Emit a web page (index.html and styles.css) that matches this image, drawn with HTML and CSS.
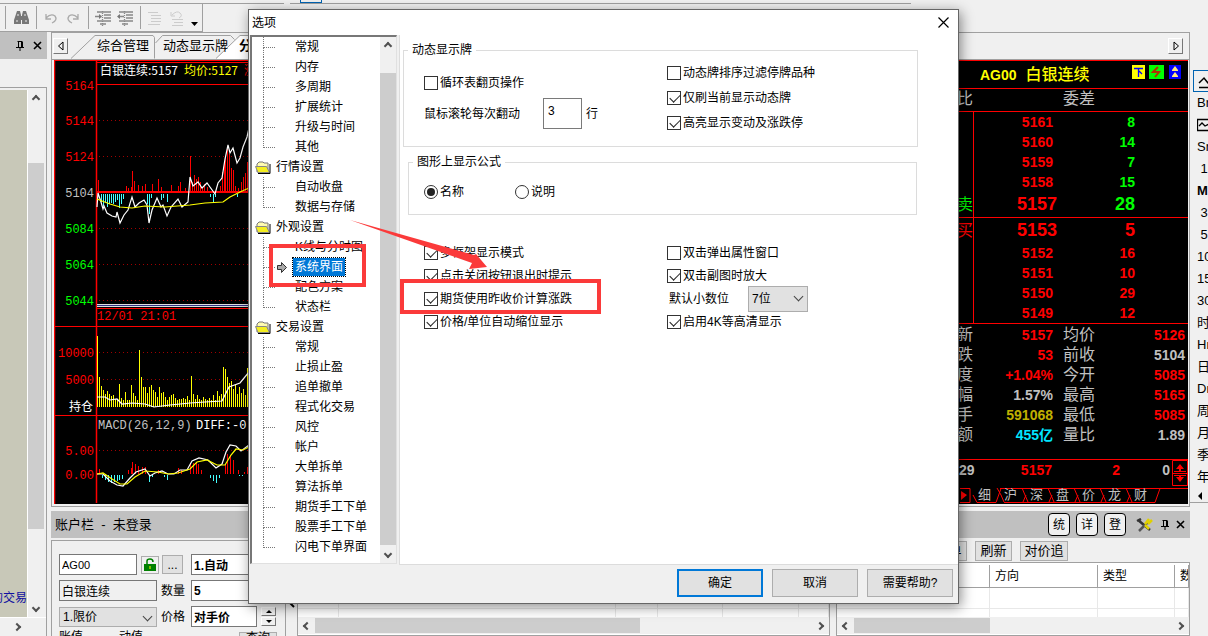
FILE: index.html
```html
<!DOCTYPE html>
<html lang="zh-CN">
<head>
<meta charset="utf-8">
<title>选项</title>
<link rel="stylesheet" href="styles.css">
</head>
<body>
<svg class="defs" aria-hidden="true">
  <symbol id="pin" viewBox="0 0 9 10"><path d="M2.5 1v5M1.5 .5h5M5.5 1v5M6.5 1v5M0 6.500h8M4 7v3" fill="none" stroke="#000"/></symbol>
  <symbol id="close" viewBox="0 0 9 9"><path d="M1 1l7 7M8 1l-7 7" fill="none" stroke="#000" stroke-width="1.6"/></symbol>
  <symbol id="folder" viewBox="0 0 16 13"><path d="M2 3l2-2h4l1 1h4v9H2z" fill="#fffbb0" stroke="#777"/><path d="M.5 5.500h11l3 6H3z" fill="#f4ee20" stroke="#888"/><path d="M3 12.500h12V3" fill="none" stroke="#000"/></symbol>
</svg>

<div class="app">
  <div class="strip"><div class="strip-a"></div><div class="strip-b"><span></span></div></div>
  <div class="toolbar">
    <svg width="202" height="28" viewBox="0 4 202 28" aria-hidden="true">
      <path d="M5.500 6v23M36.500 6v23M88.500 6v23M140.500 6v23" stroke="#a0a0a0"/>
      <g fill="#777"><path d="M17 11h3l1 4v9h-7v-4zM23 11h3l3 9v4h-7v-9z"/><path d="M19 16h5v4h-5z"/></g>
      <path d="M16 21h2M25 21h2M18 14v2M25 14v2" stroke="#eee"/>
      <g fill="none" stroke="#aaa" stroke-width="1.300"><path d="M46 14v5h5M46 18q5-5 9-2q3 4-3 7"/><path d="M78 14v5h-5M78 18q-5-5-9-2q-3 4 3 7"/></g>
      <g stroke="#888" stroke-width="1.300"><path d="M97 12h14M104 15h7M104 18h7M97 21h14M100 24h6M119 12h14M126 15h7M126 18h7M119 21h14M122 24h6"/><path d="M95 16.500h5M118 16.500h6"/><path d="M102.500 11v15M124.500 11v15" stroke-dasharray="1 1"/></g>
      <path d="M99 14l3 2.500-3 2.500zM120 14l-3 2.500 3 2.500z" fill="#777"/>
      <g stroke="#ccc" fill="none"><path d="M148 12.500h10M151 15.500h10M151 18.500h10M151 21.500h10M148 24.500h12M172 19.500h11M174 22.500h9M172 25.500h11"/><path d="M171 12v4h4M172 15q5-5 8-2t-1 5"/></g>
      <path d="M191 22h7l-3.500 4z" fill="#000"/>
    </svg>
  </div>

  <div class="workspace">
    <aside class="left">
      <div class="left-head"><svg width="9" height="10"><use href="#pin"/></svg><svg width="9" height="9"><use href="#close"/></svg></div>
      <div class="left-body">
        <div class="left-row">
          <div class="olive"><a href="#trade">的交易</a></div>
          <div class="vbar"><i class="up"></i><b class="left-thumb"></b><i class="down"></i></div>
        </div>
        <div class="left-foot"><i class="right"></i></div>
      </div>
    </aside>

    <main class="main">
      <section class="market">
        <div class="tabs">
          <svg class="tab-shape" width="210" height="26" viewBox="52 33 210 26" aria-hidden="true">
            <path d="M71 58.500L95 35.500h58l1.500 2v21M155.500 43l7-7.500h68l4 4" fill="none" stroke="#a0a0a0"/>
            <path d="M216 59L240 35.500h22V59z" fill="#fff"/><path d="M216 58.500L240 35.500h22" fill="none" stroke="#a0a0a0"/>
          </svg>
          <button class="tab-arrow" aria-label="左"><svg width="8" height="10"><path d="M6 1v8L1.500 5z" fill="none" stroke="#000"/></svg></button>
          <a class="tab tab-1" href="#a">综合管理</a><a class="tab tab-2" href="#b">动态显示牌</a><a class="tab tab-3" href="#c">分时</a>
          <button class="tab-arrow tab-end" aria-label="右"><svg width="8" height="10"><path d="M2 1v8l4.500-4z" fill="none" stroke="#000"/></svg></button>
        </div>
        <div class="boards">
          <svg class="chart" role="img" aria-label="白银连续分时">
            <g transform="translate(-54 -60)">
              <g fill="none" stroke="#f00">
                <path d="M54 60.500h900M97 62.500h860M97 84.500h860M97 308.500h860M54 326.500h900M54 415.500h900" />
                <path d="M54.500 60v444M96.500 60v355M96.500 415v88M96.500 192h860" stroke-width="1.500"/>
                <path d="M97 192h860" stroke-width="2"/>
                <path d="M99 120.500h158M99 156.500h158M99 228.500h158M99 264.500h158M99 300.500h158M99 352.500h158M99 379.500h158M99 450.500h158" stroke="#a00000" stroke-dasharray="1 3"/>
              </g>
              <path d="M97 304.500h860M97 306.500h860" stroke="#ddd"/><path d="M97 305.500h860" stroke="#303080"/>
              <g shape-rendering="crispEdges"><path id="up" stroke="#f00"/><path id="dn" stroke="#4ff"/><path id="vol" stroke="#ff0"/>
              <path id="mup" stroke="#f00"/><path id="mdn" stroke="#4ff"/></g>
              <g fill="none" stroke="#fff" stroke-width="1.200">
                <path d="M97 207L98 193l3 9 2 7 1-3 3 7 5 3 4 1 1-5 3 11 4-8 4-5 4-13 3 10 4-4 5-3 3 5 2 18 3-13 5-12 4 9 2-2 4 11 4-9 7-8 4 8 6-5 2-25 3 9 5-4 4 6 5-5 8 11 3-11 4-5 3-19 3-14 2 8 3-5 4 15 3-5 3-11 4-10 2-9"/>
                <path d="M97 397h8l5 3 7-1 5 5 10-1 13 1 9 3 16-2 20-2 15-1 17-1 7-14 11-4 9-11"/>
                <path d="M97 474h6l7 7 7 4 6 1 7-8 6-6 9-3 5 7 5-3 7-2 6 3h6l6-4h7l5-9 7-3 9 2 8 8 6-4 4-12 4-7 6 1 5 5 8-6"/>
              </g>
              <g fill="none" stroke="#ff0" stroke-width="1.200">
                <path d="M97 199l5 2 8 3 10 3 12 1 13-2 20 1 25-2 15-2 18-1 7-5 10-5 9-4"/>
                <path d="M97 474l6-1 9 6 8 5h7l8-7 10-6 13 1 10 2 10-1 12-4 7-7 10-2 10 5h8l6-10 5-6 7 1 6-3"/>
              </g>
              <g class="axis" fill="#f00">
                <text x="94" y="90">5164</text><text x="94" y="125">5144</text><text x="94" y="161">5124</text>
                <text x="94" y="197" fill="#c0c0c0">5104</text>
                <g fill="#0f0"><text x="94" y="233">5084</text><text x="94" y="269">5064</text><text x="94" y="305">5044</text></g>
                <text x="94" y="357">10000</text><text x="94" y="384">5000</text><text x="94" y="455">5.00</text><text x="94" y="479">0.00</text>
              </g>
              <text class="cjk" x="69" y="411" fill="#fff">持仓</text>
              <text class="mono" x="97" y="320" fill="#f00">12/01 21:01</text>
              <text class="mono" x="98" y="429" fill="#c0c0c0">MACD(26,12,9)</text><text class="mono" x="196" y="429" fill="#fff">DIFF:-0.</text>
              <text class="cjk" x="100" y="75" fill="#fff">白银连续:5157</text><text class="cjk" x="184" y="75" fill="#ff0">均价:5127</text><text class="cjk" x="244" y="75" fill="#f00">涨</text>
            </g>
          </svg>

          <section class="quote">
            <header class="quote-title"><span>AG00</span><strong>白银连续</strong>
              <svg width="50" height="14" viewBox="0 0 50 14" aria-hidden="true"><path d="M0 0h13v14H0z" fill="#ff0"/><path d="M2 3.500h9M6.500 4v8M7 6l3 3" stroke="#00f" stroke-width="1.300"/><path d="M17 0h15v14H17z" fill="#0f0"/><path d="M26 2l-5 5h6l-4 5" fill="none" stroke="#b33000" stroke-width="2"/><path d="M37 0h12v14H37z" fill="#00f"/><path d="M43 1l3 4h-6zM43 7l3 4h-6z" fill="#ffe880"/><path d="M40 5.500h6M40 11.500h6" stroke="#ffe880"/></svg>
            </header>
            <div class="ratio"><span>比</span><span>委差</span></div>
            <div class="book sell">
              <div><i></i><b>5161</b><em>8</em></div><div><i></i><b>5160</b><em>14</em></div><div><i></i><b>5159</b><em>7</em></div><div><i></i><b>5158</b><em>15</em></div><div class="big"><i>卖</i><b>5157</b><em>28</em></div>
            </div>
            <div class="book buy">
              <div class="big"><i>买</i><b>5153</b><em>5</em></div><div><i></i><b>5152</b><em>16</em></div><div><i></i><b>5151</b><em>10</em></div><div><i></i><b>5150</b><em>29</em></div><div><i></i><b>5149</b><em>12</em></div>
            </div>
            <div class="info">
              <div><span>新</span><b>5157</b><span>均价</span><b>5126</b></div>
              <div><span>跌</span><b>53</b><span>前收</span><b class="gray">5104</b></div>
              <div><span>度</span><b>+1.04%</b><span>今开</span><b>5085</b></div>
              <div><span>幅</span><b class="gray">1.57%</b><span>最高</span><b>5165</b></div>
              <div><span>手</span><b class="gold">591068</b><span>最低</span><b>5085</b></div>
              <div><span>额</span><b class="cyan">455亿</b><span>量比</span><b class="gray">1.89</b></div>
            </div>
            <div class="tick"><span>29</span><b>5157</b><b>2</b><span>0</span>
              <svg width="16" height="26" viewBox="0 0 16 26" aria-hidden="true"><path d="M.5.500h15v25H.500z" fill="none" stroke="#f00"/><path d="M8 4l4 5H9v2H7V9H4zM8 22l4-5H9v-1H7v1H4zM2 11h12v1H2zM1 13h14v1H1zM2 15h12v1H2z" fill="#f00"/></svg>
            </div>
            <nav class="quote-tabs">
              <svg width="231" height="18" viewBox="957 485 231 18" aria-hidden="true"><path d="M960 487.500h10v14h-10M1000 487.500h188M973 494l4 7.500h19l5-14M997 487l4 7M1004 501.500h151l5-14M1001 494l3 7M1022 487l6 14M1048 487l6 14M1074 487l6 14M1100 487l6 14M1126 487l6 14M1023 501l3-7M1049 501l3-7M1075 501l3-7M1101 501l3-7M1127 501l3-7" fill="none" stroke="#f00"/><path d="M961 490l6 4-6 5z" fill="#f00"/></svg>
              <a href="#1">细</a><a href="#2">沪</a><a href="#3">深</a><a href="#4">盘</a><a href="#5">价</a><a href="#6">龙</a><a href="#7">财</a>
            </nav>
          </section>
        </div>
      </section>

      <div class="account-head"><span>账户栏&nbsp; -&nbsp; 未登录</span>
        <div class="account-tools"><button>统</button><button>详</button><button>登</button>
          <svg class="tools" width="17" height="14" viewBox="0 0 17 14" aria-hidden="true"><path d="M2 2l12 10M1 3l4-2" stroke="#333" stroke-width="2.500"/><path d="M3 13L12 4" stroke="#555" stroke-width="2.500"/><path d="M9 6l4-5M12 6l4-4M9 7l4 4" stroke="#e0d000" stroke-width="2.500"/></svg>
          <svg width="9" height="10"><use href="#pin"/></svg><svg width="9" height="9"><use href="#close"/></svg></div>
      </div>

      <div class="bottom">
        <form class="order">
          <div class="order-row"><input class="f-code" value="AG00" aria-label="代码"><button type="button" class="lock" aria-label="锁定"><svg width="12" height="14"><path d="M0 6h12v7H0z" fill="green"/><path d="M3 6V3q0-2 3-2t3 3" fill="none" stroke="green" stroke-width="1.500"/><path d="M5.500 8h1v3h-1z" fill="#ff0"/></svg></button><button type="button" class="dots">...</button><input class="f-long" value="1.自动" aria-label="方式"></div>
          <div class="order-row"><input class="f-name" value="白银连续" readonly aria-label="名称"><label for="qty">数量</label><input class="f-long" id="qty" value="5"></div>
          <div class="order-row"><span class="pick f-name"><select aria-label="类型"><option>1.限价</option></select></span><label for="price">价格</label><input class="f-price" id="price" value="对手价"><span class="spin"><button type="button" aria-label="加"><i></i></button><button type="button" aria-label="减"><i class="flip"></i></button></span></div>
          <div class="order-row order-last"><span>账值</span><span>动值</span><button type="button">查询</button></div>
        </form>
        <div class="split"><svg width="10" height="10"><path d="M3 1l5 5" stroke="#000" stroke-width="2"/></svg></div>
        <section class="grid-box mid">
          <table><colgroup><col class="c40"><col><col class="c42"><col class="c65"><col class="c76"><col class="c30"></colgroup><tr><td></td><td></td><td></td><td></td><td></td><td></td></tr><tr class="cut"><td></td><td></td><td></td><td></td><td></td><td></td></tr></table>
          <div class="hbar"><i class="lefta"></i><b class="thumb-mid"></b><i class="right"></i></div>
        </section>
        <section class="orders">
          <div class="orders-bar"><button>撤单</button><button>刷新</button><button>对价追</button></div>
          <div class="grid-box">
            <table><colgroup><col><col class="c108"><col class="c77"><col class="c14"></colgroup><tr><th></th><th>方向</th><th>类型</th><th>数</th></tr><tr><td></td><td></td><td></td><td></td></tr><tr class="cut"><td></td><td></td><td></td><td></td></tr></table>
            <div class="hbar"><i class="lefta"></i><b class="thumb-right"></b><i class="right"></i></div>
          </div>
        </section>
      </div>
    </main>

    <nav class="periods">
      <a class="on" href="#p"><svg width="16" height="14"><path d="M1 8l5-5 4 5 5 1M1 12.500h15" fill="none" stroke="#000" stroke-width="1.500"/></svg></a><a href="#p">Bn</a><a href="#p"><svg width="16" height="14"><path d="M.5 1.500h15v11H.500zM2 8l3-3 3 3 4-2" fill="none" stroke="#000" stroke-width="1.300"/></svg></a><a href="#p">Sn</a><a href="#p">&nbsp;1</a><a href="#p"><b>Mn</b></a><a href="#p">&nbsp;3</a><a href="#p">&nbsp;5</a><a href="#p">10</a><a href="#p">15</a><a href="#p">30</a><a href="#p">时</a><a href="#p">Hn</a><a href="#p">日</a><a href="#p">Dn</a><a href="#p">周</a><a href="#p">月</a><a href="#p">季</a><a href="#p">年</a><a class="more" href="#p"><svg width="6" height="8"><path d="M5 0v8L1 4z"/></svg></a>
    </nav>
  </div>

  <div class="dialog" role="dialog" aria-labelledby="dlg">
    <div class="dlg-title"><span id="dlg">选项</span><button aria-label="关闭"><svg width="11" height="11"><path d="M.5.500l10 10M10.500.500l-10 10" stroke="#000" stroke-width="1.200"/></svg></button></div>
    <div class="dlg-body">
      <div class="tree">
        <ul class="nodes">
          <li>常规</li><li>内存</li><li>多周期</li><li>扩展统计</li><li>升级与时间</li><li class="last">其他</li>
          <li class="group"><svg width="16" height="13"><use href="#folder"/></svg>行情设置</li><li>自动收盘</li><li class="last">数据与存储</li>
          <li class="group"><svg width="16" height="13"><use href="#folder"/></svg>外观设置</li><li>K线与分时图</li>
          <li class="current"><svg class="arrow" width="10" height="11"><path d="M.5 3.500h4v-3l5 5-5 5v-3h-4z" fill="#aaa" stroke="#333"/></svg><span>系统界面</span></li><li>配色方案</li><li class="last">状态栏</li>
          <li class="group"><svg width="16" height="13"><use href="#folder"/></svg>交易设置</li><li>常规</li><li>止损止盈</li><li>追单撤单</li><li>程式化交易</li><li>风控</li><li>帐户</li><li>大单拆单</li><li>算法拆单</li><li>期货手工下单</li><li>股票手工下单</li><li class="last">闪电下单界面</li>
        </ul>
        <div class="vbar"><i class="up"></i><b class="tree-thumb"></b><i class="down"></i></div>
      </div>
      <form class="page">
        <fieldset class="fs-board"><legend>动态显示牌</legend>
          <div class="cols">
            <div class="lcol"><label><input type="checkbox">循环表翻页操作</label>
              <div class="wheel"><label for="wheel">鼠标滚轮每次翻动</label><input id="wheel" type="text" value="3"><span>行</span></div></div>
            <div class="rcol"><label><input type="checkbox">动态牌排序过滤停牌品种</label><label><input type="checkbox" checked>仅刷当前显示动态牌</label><label><input type="checkbox" checked>高亮显示变动及涨跌停</label></div>
          </div>
        </fieldset>
        <fieldset class="fs-formula"><legend>图形上显示公式</legend>
          <div class="radios"><label><input type="radio" name="f" checked>名称</label><label><input type="radio" name="f">说明</label></div>
        </fieldset>
        <div class="cols options">
          <div><label><input type="checkbox" checked>多框架显示模式</label><label><input type="checkbox" checked>点击关闭按钮退出时提示</label><label><input type="checkbox" checked>期货使用昨收价计算涨跌</label><label><input type="checkbox" checked>价格/单位自动缩位显示</label></div>
          <div><label><input type="checkbox">双击弹出属性窗口</label><label><input type="checkbox" checked>双击副图时放大</label><div class="digits"><label for="digits">默认小数位</label><span class="pick"><select id="digits"><option>7位</option></select></span></div><label><input type="checkbox" checked>启用4K等高清显示</label></div>
        </div>
      </form>
    </div>
    <div class="dlg-foot"><button class="primary">确定</button><button>取消</button><button>需要帮助?</button></div>
    <svg class="marks" width="400" height="330" viewBox="248 9 400 330" aria-hidden="true"><path d="M271 246h93v39h-93zM402 281h197v31H402z" fill="none" stroke="#fb3a3a" stroke-width="4"/><path d="M350 220L474 255l2-1 11 13-18 2 3-6z" fill="#fb3a3a"/></svg>
  </div>
</div>
<script src="chart.js"></script>
</body>
</html>
```
FILE: styles.css
```css
* { box-sizing: border-box; }
body { margin: 0; font: 12px/16px "Liberation Sans", "Noto Sans CJK SC", sans-serif; color: #000; background: #f0f0f0; }
button, input, select { font: inherit; color: inherit; padding: 0; margin: 0; border-radius: 0; }
button { background: #e1e1e1; border: 1px solid #adadad; }
a { color: inherit; text-decoration: none; }
i, em { font-style: normal; }
svg { display: block; flex: none; }
.defs { position: absolute; width: 0; height: 0; }

.app { position: relative; display: flex; flex-direction: column; height: 100vh; overflow: hidden; }
.strip { display: flex; gap: 6px; height: 4px; flex: none; }
.strip-a, .strip-b { border-bottom: 1px solid #a0a0a0; }
.strip-a { width: 284px; }
.strip-b { width: 621px; padding-left: 10px; }
.strip-b span { display: block; width: 22px; height: 3px; border: 1px solid #0063b1; border-top: 0; }
.toolbar { height: 28px; width: 203px; border-right: 1px solid #a0a0a0; border-bottom: 1px solid #a0a0a0; flex: none; }
.workspace { display: flex; flex: 1; min-height: 0; }

/* shared scrollbars */
.vbar { width: 16px; display: flex; flex-direction: column; align-items: center; justify-content: space-between; background: #f0f0f0; padding: 6px 0; }
.vbar b, .hbar b { background: #cdcdcd; }
.vbar b { width: 100%; }
.up, .down, .lefta, .right { width: 6px; height: 6px; border: solid #505050; border-width: 2px 0 0 2px; flex: none; }
.up { transform: rotate(45deg); }
.down { transform: rotate(225deg); }
.lefta { transform: rotate(-45deg); }
.right { transform: rotate(135deg); }
.hbar { display: flex; align-items: center; height: 17px; background: #f0f0f0; padding: 0 6px; gap: 5px; flex: none; }
.hbar b { height: 15px; }
.hbar .right { margin-left: auto; }

/* left dock */
.left { width: 47px; margin-right: 4px; display: flex; flex-direction: column; }
.left-head { height: 27px; background: #c0c0c0; display: flex; align-items: center; justify-content: flex-end; gap: 8px; padding-right: 5px; }
.left-body { flex: 1; margin-top: 28px; border: solid #a0a0a0; border-width: 1px 1px 0 0; display: flex; flex-direction: column; padding-top: 2px; min-height: 0; }
.left-row { flex: 1; display: flex; }
.olive { width: 28px; background: #c8c8b8; border-right: 1px solid #fff; display: flex; align-items: flex-end; justify-content: flex-end; overflow: hidden; padding-bottom: 11px; color: #1010a0; white-space: nowrap; }
.left-thumb { height: 366px; margin: 61px 0 auto; }
.left-foot { display: flex; align-items: center; height: 19px; border-top: 1px solid #fff; padding: 0 14px; }

/* market area */
.main { flex: 1; min-width: 0; display: flex; flex-direction: column; }
.market { border: 1px solid #a0a0a0; padding-bottom: 2px; }
.tabs { position: relative; height: 27px; display: flex; align-items: center; padding: 0 6px 0 1px; border-bottom: 1px solid #a0a0a0; }
.tab-shape { position: absolute; left: 0; top: 0; }
.tab-arrow { position: relative; width: 15px; height: 16px; display: flex; align-items: center; justify-content: center; background: #f0f0f0; border: 1px solid; border-color: #fff #777 #777 #fff; }
.tab-end { margin-left: auto; }
.tab { position: relative; font-size: 13px; }
.tab-1 { margin-left: 29px; }
.tab-2 { margin-left: 14px; }
.tab-3 { margin-left: 11px; font-weight: bold; }
.boards { display: flex; margin: 0 1px 0 2px; background: #000; }
.chart { flex: 1; min-width: 0; height: auto; overflow: hidden; }
.axis text { font: 12px "Liberation Mono", monospace; text-anchor: end; }
.mono { font: 12px "Liberation Mono", monospace; }
.cjk { font: 12px "Noto Sans CJK SC", sans-serif; }

.quote { width: 231px; color: #c0c0c0; border-top: 1px solid #f00; font-size: 16px; line-height: 20px; }
.quote b, .quote em { font-size: 14px; font-weight: bold; }
.quote-title { height: 28px; display: flex; align-items: center; padding: 0 6px 0 23px; color: #ff0; font-size: 14px; font-weight: bold; border-bottom: 1px solid #f00; }
.quote-title strong { font-size: 16px; font-weight: 500; margin-left: 9px; }
.quote-title svg { margin: 0 0 6px auto; }
.ratio { height: 23px; display: flex; gap: 90px; border-bottom: 1px solid #f00; }
.book { display: flex; flex-direction: column; border-bottom: 1px solid #f00; color: #f00; }
.book div { display: flex; align-items: center; height: 20px; }
.book i { width: 17px; height: 100%; border-right: 1px solid #f00; overflow: hidden; }
.book b { width: 79px; text-align: right; }
.book em { width: 82px; text-align: right; }
.book .big { height: 25px; line-height: 25px; }
.book .big b { font-size: 18px; width: 83px; }
.book .big em { font-size: 18px; width: 78px; }
.sell em, .sell i { color: #0f0; }
.info { padding: 1px 0 14px; }
.info div { display: flex; align-items: center; height: 20px; }
.info b { width: 80px; text-align: right; color: #f00; }
.info span + b + span { margin-left: 10px; }
.info span + b + span + b { width: 90px; }
.info .gray { color: #c0c0c0; }
.info .gold { color: #c0b000; }
.info .cyan { color: #00e5ff; }
.tick { display: flex; align-items: flex-start; border-top: 1px solid #f00; height: 27px; font-size: 14px; color: #c0c0c0; font-weight: bold; }
.tick span:first-child { width: 18px; padding-left: 2px; }
.tick b { color: #f00; width: 77px; text-align: right; }
.tick b + b { width: 68px; }
.tick b + span { margin-left: auto; padding-right: 2px; }
.quote-tabs { position: relative; display: flex; gap: 10px; height: 18px; padding-left: 21px; line-height: 18px; font-size: 13px; }
.quote-tabs a { width: 16px; position: relative; }
.quote-tabs svg { position: absolute; left: 0; top: 0; }

/* account strip */
.account-head { height: 27px; margin-top: 4px; background: #c0c0c0; display: flex; align-items: center; justify-content: space-between; padding: 0 5px 0 4px; font-size: 13px; flex: none; }
.account-tools { display: flex; align-items: center; gap: 6px; }
.account-tools button { width: 22px; height: 23px; border: 1px solid #000; border-radius: 4px; background: #f0f0f0; font-size: 12px; }
.tools { margin: 0 2px 0 4px; }
.bottom { flex: 1; display: flex; min-height: 0; margin-top: 2px; }
.order { width: 235px; border: 1px solid #a0a0a0; border-bottom: 0; padding: 13px 8px 0 7px; display: flex; flex-direction: column; gap: 5px; overflow: hidden; }
.order-row { display: flex; align-items: center; height: 21px; flex: none; white-space: nowrap; }
.order input { height: 21px; border: 1px solid #777; background: #fff; padding: 0 2px; }
.order .f-code { width: 78px; margin-right: 4px; font-size: 11px; }
.order .f-name { width: 98px; margin-right: 4px; }
.order input.f-name { background: #f0f0f0; }
.order label { width: 30px; }
.order .f-long { flex: 1; min-width: 0; font-weight: bold; }
.order .f-price { width: 66px; font-weight: bold; }
.lock { width: 18px; height: 18px; display: flex; align-items: center; justify-content: center; background: #f0f0f0; margin-right: 3px; }
.dots { width: 21px; height: 19px; margin-right: 8px; }
.spin { display: flex; flex-direction: column; margin-left: 4px; gap: 1px; }
.spin button { width: 15px; height: 9px; display: flex; align-items: center; justify-content: center; background: #f0f0f0; border-color: #fff #777 #777 #fff; }
.spin i { border: 3px solid transparent; border-top: 0; border-bottom-color: #000; }
.spin .flip { transform: scaleY(-1); }
.order-last { gap: 36px; height: 12px; line-height: 10px; align-items: flex-start; }
.order-last button { width: 38px; margin-left: auto; line-height: 10px; }
.split { width: 11px; padding-top: 61px; }

.pick { position: relative; display: inline-block; background: #e1e1e1; }
.pick select { appearance: none; width: 100%; height: 100%; border: 1px solid #adadad; background: #e1e1e1; padding: 0 3px; }
.order .pick { height: 20px; }
.pick::after { content: ""; position: absolute; right: 6px; top: 6px; width: 6px; height: 6px; border: solid #444; border-width: 0 1px 1px 0; transform: rotate(45deg); pointer-events: none; }

.grid-box { flex: 1; min-width: 0; min-height: 0; border: 1px solid #a0a0a0; background: #fff; display: flex; flex-direction: column; justify-content: flex-end; padding-bottom: 1px; }
.grid-box table { width: 100%; border-collapse: collapse; table-layout: fixed; }
.grid-box td { height: 21px; border: solid #e8e8e8; border-width: 1px 1px 0 0; padding: 0; }
.grid-box .cut td { height: 9px; }
.grid-box th { height: 22px; text-align: left; font-weight: normal; padding: 0 0 0 5px; border-right: 1px solid #a0a0a0; border-bottom: 1px solid #a0a0a0; overflow: hidden; white-space: nowrap; }
.c14 { width: 14px; }
.c30 { width: 30px; }
.c40 { width: 40px; }
.c42 { width: 42px; }
.c65 { width: 65px; }
.c76 { width: 76px; }
.c77 { width: 77px; }
.c108 { width: 108px; }
.thumb-mid { width: 325px; }
.thumb-right { width: 136px; }
.mid { margin-right: 6px; }
.orders { width: 354px; display: flex; flex-direction: column; }
.orders-bar { display: flex; gap: 8px; height: 22px; padding: 1px 0 0 94px; }
.orders-bar button { width: 37px; height: 20px; font-size: 13px; flex: none; }
.orders-bar button:last-child { width: 48px; }

/* period bar */
.periods { width: 18px; padding: 38px 0 0 3px; overflow: hidden; display: flex; flex-direction: column; height: 471px; border-bottom: 1px solid #a0a0a0; }
.periods a { flex: none; height: 22px; line-height: 22px; padding-left: 4px; font-size: 13px; white-space: nowrap; }
.periods svg { margin: 4px 0; }
.periods .on { border: 1px solid #0063b1; border-right: 0; }
.periods .more { height: 14px; }

/* options dialog */
.dialog { position: absolute; left: 248px; right: 249px; top: 9px; background: #f0f0f0; border: 1px solid #666; box-shadow: 2px 3px 12px rgba(0, 0, 0, .45); }
.dlg-title { height: 25px; background: #fff; display: flex; align-items: center; justify-content: space-between; padding: 0 9px 0 3px; }
.dlg-title button { border: 0; background: none; }
.dlg-body { display: flex; }
.tree { width: 147px; margin: 0 2px 1px 1px; display: flex; background: #fff; border: 1px solid #e0e0e0; border-top: 2px solid #777; border-left: 2px solid #777; }
.nodes { flex: 1; list-style: none; margin: 0; padding: 0 0 6px; }
.nodes li { position: relative; height: 20px; line-height: 20px; padding-left: 43px; white-space: nowrap; }
.nodes li::before { content: ""; position: absolute; left: 11px; top: 0; width: 11px; height: 10px; border: dotted #777; border-width: 0 0 1px 1px; }
.nodes li:not(.last)::after { content: ""; position: absolute; left: 11px; top: 10px; height: 10px; border-left: 1px dotted #777; }
.nodes .group { display: flex; align-items: center; gap: 5px; padding-left: 3px; }
.nodes .group::before, .nodes .group::after { display: none; }
.nodes .current { display: flex; align-items: center; padding-left: 25px; gap: 6px; }
.current span { background: #0078d7; color: #fff; outline: 1px dotted #000; padding: 0 2px; line-height: 18px; }
.tree .vbar { background: #f0f0f0; }
.tree-thumb { flex: 1; margin: 24px 0 6px; }
.page { flex: 1; min-width: 0; background: #fff; border: solid #dcdcdc; border-width: 0 0 1px 1px; padding: 7px 40px 0 3px; }
.page fieldset { margin: 0; border: 1px solid #dcdcdc; min-width: 0; }
.page legend { padding: 0 4px; margin-left: -16px; height: 16px; }
.page .fs-board { padding: 2px 0 11px 20px; }
.page .fs-formula { margin: 7px 1px 0 5px; padding: 12px 0 12px 15px; }
.fs-formula legend { margin-left: -11px; }
.cols { display: grid; grid-template-columns: 243px 1fr; }
.page label { display: flex; align-items: center; gap: 2px; white-space: nowrap; }
.lcol { padding-top: 13px; }
.lcol > label { height: 20px; }
.wheel { display: flex; align-items: center; margin-top: 5px; gap: 4px; }
.wheel label { width: 115px; height: 26px; }
.wheel input { width: 39px; height: 31px; border: 1px solid #7a7a7a; padding: 0 4px 6px; }
.rcol label { height: 25px; }
.radios { display: flex; height: 20px; gap: 51px; }
.options { padding: 26px 0 0 21px; }
.options div > label { height: 23px; }
.options .digits { display: flex; align-items: center; height: 23px; }
.digits label { width: 81px; padding-left: 2px; }
.digits .pick { width: 60px; height: 26px; }
.digits .pick::after { top: 7px; }
.page input[type=checkbox], .page input[type=radio] { appearance: none; width: 14px; height: 14px; border: 1px solid #333; background: #fff; position: relative; flex: none; }
.page input[type=radio] { border-radius: 50%; }
.page input[type=checkbox]:checked::before { content: ""; position: absolute; left: 2px; top: 2px; width: 9px; height: 5px; border: solid #222; border-width: 0 0 1px 1px; transform: rotate(-45deg); }
.page input[type=radio]:checked::before { content: ""; position: absolute; inset: 2px; border-radius: 50%; background: #222; }
.dlg-foot { display: flex; justify-content: flex-end; gap: 9px; padding: 4px 5px 6px; }
.dlg-foot button { width: 86px; height: 28px; }
.dlg-foot .primary { border: 2px solid #0078d7; }
.marks { position: absolute; left: -1px; top: -1px; pointer-events: none; }
```
FILE: chart.js
```js
// Each series is drawn as vertical strokes from a base line.
function strokes(id, base, dir, bars) {
  document.getElementById(id).setAttribute('d', bars.map(function (b) {
    return 'M' + (b[0] + 0.5) + ' ' + base + 'v' + dir * b[1];
  }).join(''));
}
var volume = [71,30,21,17,13,16,13,11,12,8,7,23,9,7,15,7,7,22,14,11,7,57,30,20,20,14,20,22,17,15,10,20,14,15,10,7,10,12,13,9,7,8,8,9,8,11,7,31,13,8,12,8,7,10,8,7,9,7,12,7,16,11,13,40,38,30,24,26,18,22,13,20,14,18,12,39];
strokes('vol', 407, -1, volume.map(function (h, i) { return [97 + i * 2, h]; }));
strokes('up', 192, -1, [[98,12],[126,6],[128,4],[131,5],[132,21],[134,11],[138,7],[142,6],[145,8],[152,8],[158,13],[161,5],[171,7],[178,6],[180,10],[185,4],[190,36],[192,10],[194,17],[196,13],[198,15],[200,10],[202,4],[204,8],[207,5],[220,6],[222,20],[224,30],[225,36],[227,43],[229,38],[231,24],[233,22],[235,6],[238,4],[241,10],[243,15],[245,19],[247,30]]);
strokes('dn', 194, 1, [[101,8],[103,12],[105,8],[107,13],[109,10],[111,9],[113,10],[115,8],[117,6],[119,14],[121,10],[123,5],[147,10],[149,20],[151,4],[161,6],[163,4],[167,8],[210,3],[213,8],[215,3],[237,3]]);
strokes('mup', 474, -1, [[99,5],[128,4],[131,6],[132,12],[135,10],[138,8],[142,7],[145,7],[158,4],[178,6],[181,4],[190,10],[193,11],[196,11],[198,10],[201,4],[225,10],[227,20],[230,19],[233,14],[238,4],[244,2],[247,7]]);
strokes('mdn', 475, 1, [[102,3],[105,5],[108,7],[111,8],[114,7],[117,6],[119,5],[122,4],[149,7],[152,2],[164,2],[167,5],[210,3],[213,6],[216,8],[219,3],[239,1],[242,1]]);
```
